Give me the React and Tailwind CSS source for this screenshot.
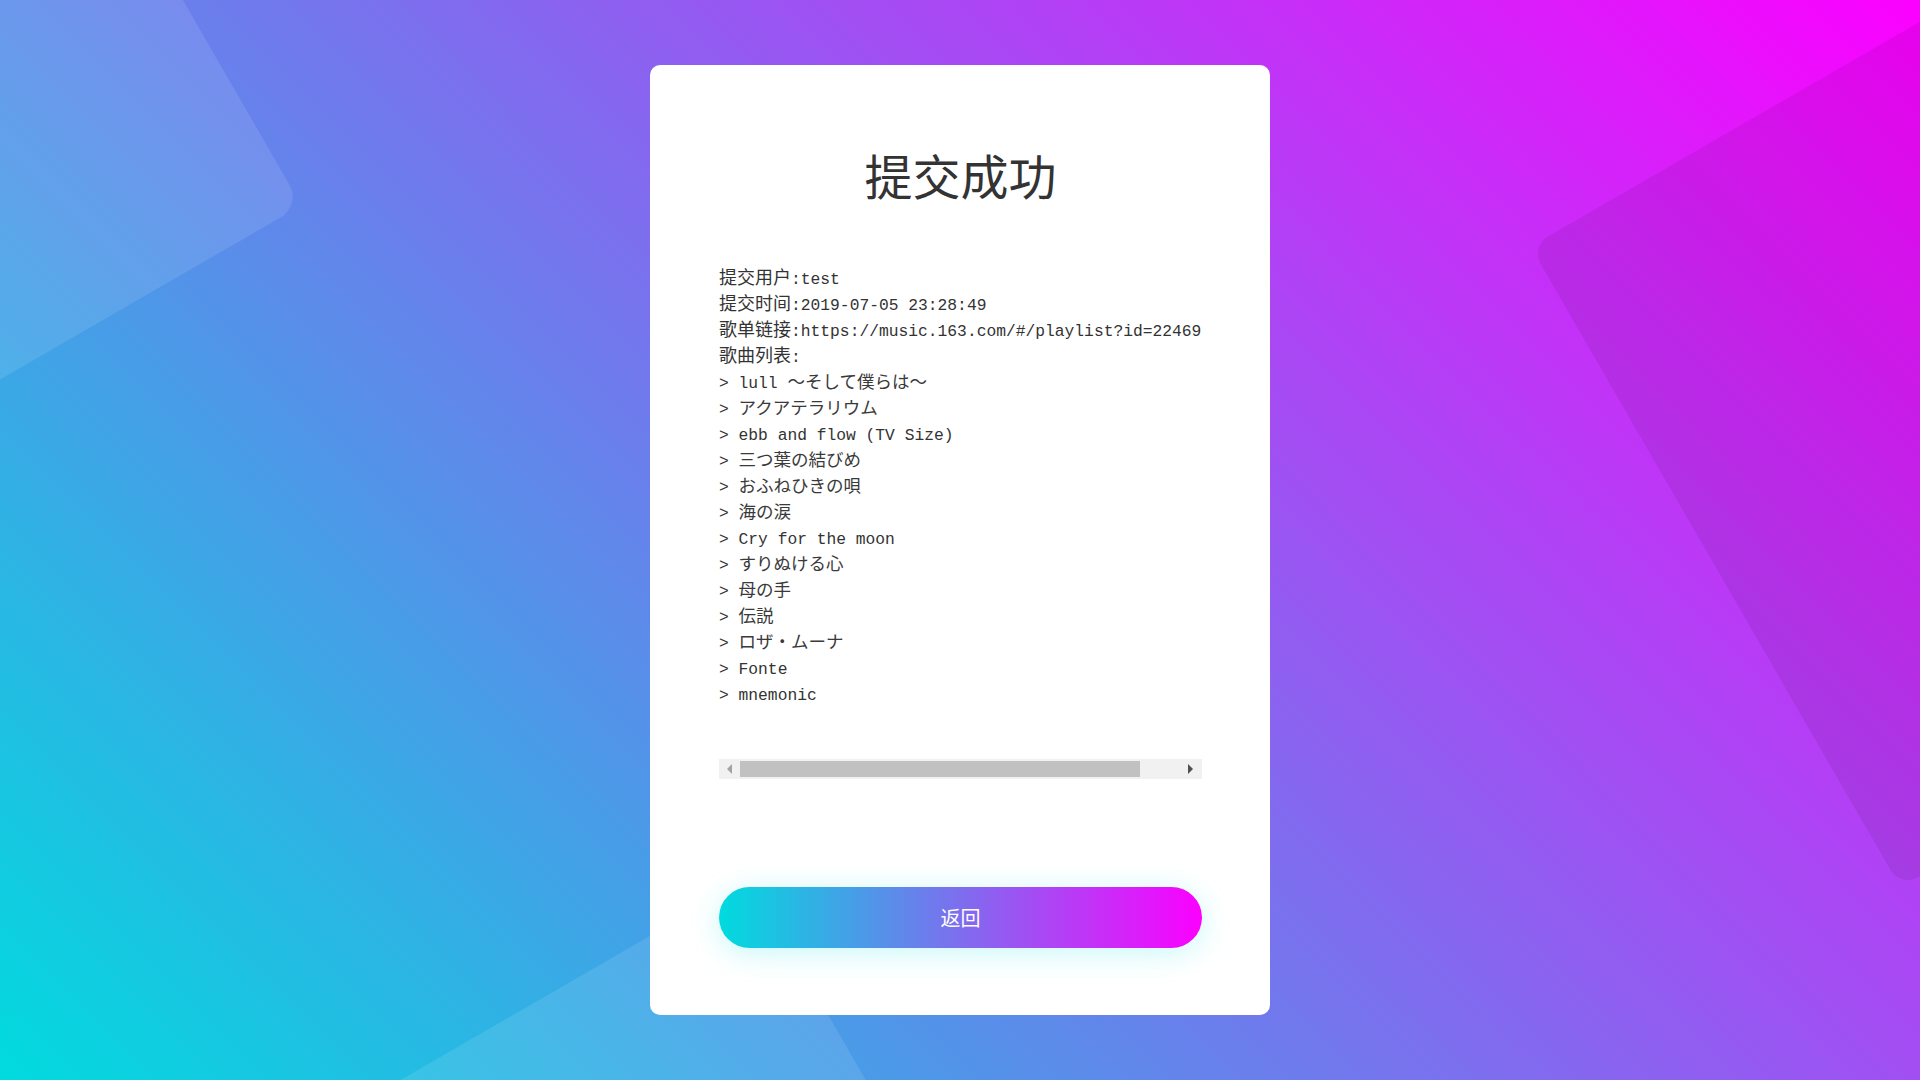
import React from 'react';

const info = [
  ['提交用户', 'test'],
  ['提交时间', '2019-07-05 23:28:49'],
  ['歌单链接', 'https://music.163.com/#/playlist?id=22469'],
  ['歌曲列表', ''],
];

const songs = [
  'lull ～そして僕らは～',
  'アクアテラリウム',
  'ebb and flow (TV Size)',
  '三つ葉の結びめ',
  'おふねひきの唄',
  '海の涙',
  'Cry for the moon',
  'すりぬける心',
  '母の手',
  '伝説',
  'ロザ・ムーナ',
  'Fonte',
  'mnemonic',
];

// split a title into latin / cjk runs so the wide glyphs get their own size
const runs = (text) => {
  const out = [];
  let cur = '';
  let cjk = null;
  for (const ch of text) {
    const isCjk = /[\u3000-\u9fff\uff00-\uffef]/.test(ch);
    if (cjk !== null && isCjk !== cjk) {
      out.push({ text: cur, cjk });
      cur = '';
    }
    cjk = isCjk;
    cur += ch;
  }
  if (cur) out.push({ text: cur, cjk });
  return out;
};

const Mono = ({ children }) => (
  <span className="font-['Liberation_Mono',monospace] text-[#333]">{children}</span>
);

const App = () => {
  return (
    <div className="relative w-full h-screen overflow-hidden bg-[linear-gradient(45deg,#00dbde,#fc00ff)] flex items-center justify-center">

      {/* background shapes */}
      <div className="absolute left-[-645px] top-[-341px] w-[800px] h-[800px] rounded-[24px] bg-white/10 rotate-[-30deg]" />
      <div className="absolute left-[1666px] top-[12px] w-[740px] h-[740px] rounded-[20px] bg-black/[0.07] rotate-[-30deg]" />
      <div className="absolute left-[203px] top-[1025px] w-[800px] h-[800px] rounded-[24px] bg-white/10 rotate-[-30deg]" />

      {/* Card */}
      <div className="relative w-[620px] h-[950px] bg-white rounded-[10px] pt-[85px] pl-[69px] pr-[68px] flex flex-col">
        <h1 className="text-center text-[48px] leading-[48px] h-[48px] text-[#333] font-['Noto_Sans_CJK_SC',sans-serif] font-normal">
          提交成功
        </h1>

        <div className="mt-[66px] w-[483px] overflow-hidden text-[#3a3a3a] text-[16.3px] font-['Noto_Sans_CJK_JP',sans-serif]">
          {info.map(([label, value]) => (
            <div key={label} className="h-[26px] leading-[24px] whitespace-nowrap">
              <span className="text-[18px] text-[#333] font-['Noto_Sans_CJK_SC',sans-serif]">{label}</span>
              <Mono>:{value}</Mono>
            </div>
          ))}
          {songs.map(s => (
            <div key={s} className="h-[26px] leading-[26px] whitespace-nowrap">
              <Mono>{'> '}</Mono>
              {runs(s).map((r, i) => r.cjk ? (
                <span key={i} className="text-[17.5px]">{r.text}</span>
              ) : (
                <Mono key={i}>{r.text}</Mono>
              ))}
            </div>
          ))}
        </div>

        {/* horizontal scrollbar */}
        <div className="mt-[53px] w-[483px] h-[20px] bg-[#f1f1f1] flex items-center">
          <div className="w-[21px] h-full flex items-center justify-center">
            <svg width="6" height="10" viewBox="0 0 6 10"><polygon points="5,0 5,10 0,5" fill="#a3a3a3" /></svg>
          </div>
          <div className="w-[400px] h-[16px] bg-[#c1c1c1]" />
          <div className="flex-1 h-full flex items-center justify-end pr-[8px]">
            <svg width="6" height="10" viewBox="0 0 6 10"><polygon points="0,0 0,10 5,5" fill="#505050" /></svg>
          </div>
        </div>

        <button className="mt-[108px] w-[483px] h-[61px] rounded-full bg-[linear-gradient(to_right,#00dbde,#fc00ff)] shadow-[0_5px_30px_rgba(0,219,222,0.22)] text-white text-[20px] font-['Noto_Sans_CJK_SC',sans-serif]">
          返回
        </button>
      </div>
    </div>
  );
};

export default App;
